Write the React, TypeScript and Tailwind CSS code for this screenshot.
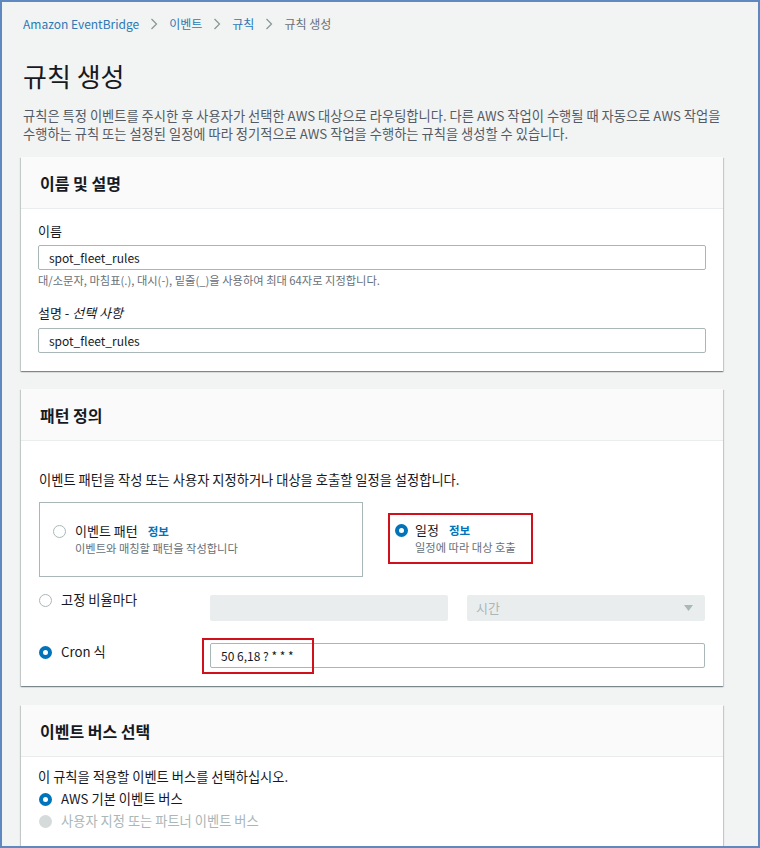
import React from 'react';

type RadioState = 'on' | 'off' | 'disabled';

function Radio({ state }: { state: RadioState }) {
  if (state === 'on') {
    return <span className="block w-[13px] h-[13px] shrink-0 rounded-full border-4 border-[#0073bb] bg-white" />;
  }
  if (state === 'disabled') {
    return <span className="block w-[13px] h-[13px] shrink-0 rounded-full bg-[#d5dbdb]" />;
  }
  return <span className="block w-[13px] h-[13px] shrink-0 rounded-full border border-[#aab7b8] bg-white" />;
}

function Chevron() {
  return (
    <svg width="8" height="12" viewBox="0 0 8 12" className="mx-[11px] shrink-0">
      <polyline points="1.5,1 6.5,6 1.5,11" fill="none" stroke="#879596" strokeWidth="1.2" />
    </svg>
  );
}

function Card({ title, children, className = '' }: { title: string; children: React.ReactNode; className?: string }) {
  return (
    <section
      className={`bg-white shadow-[0_1px_1px_0_rgba(0,28,36,0.3),1px_1px_1px_0_rgba(0,28,36,0.15),-1px_1px_1px_0_rgba(0,28,36,0.15)] ${className}`}
    >
      <div className="h-[52px] bg-[#fafafa] border-b border-[#eaeded] px-[19px] flex items-center">
        <h2 className="text-[16px] font-bold leading-[20px] text-[#16191f]">{title}</h2>
      </div>
      {children}
    </section>
  );
}

function TextInput({ value, className = '' }: { value: string; className?: string }) {
  return (
    <div
      className={`h-[25px] border border-[#aab7b8] rounded-[2px] bg-white px-[10px] flex items-center text-[12px] text-[#16191f] ${className}`}
    >
      {value}
    </div>
  );
}

// radio + title/"정보" + description, radio lined up with the first line
function Choice({ title, sub, on, gap }: { title: string; sub: string; on: boolean; gap: string }) {
  return (
    <div className={`flex items-start ${gap}`}>
      <div className="mt-[2.5px]">
        <Radio state={on ? 'on' : 'off'} />
      </div>
      <div>
        <div className="leading-[18px] text-[13px] text-[#16191f] flex items-center">
          {title}
          <span className="ml-[10px] text-[11.5px] font-bold text-[#0073bb]">정보</span>
        </div>
        <div className="leading-[17px] text-[11.25px] text-[#687078]">{sub}</div>
      </div>
    </div>
  );
}

export default function App() {
  return (
    <div className="w-[760px] h-[848px] overflow-hidden border-2 border-[#5f87c0] bg-[#f2f3f3] font-['Noto_Sans_CJK_KR','Noto_Sans',sans-serif] text-[#16191f]">
      <div className="pl-[19px] pr-[35px] pt-[13px]">
        {/* Breadcrumb */}
        <nav className="flex items-center h-[18px] text-[12px] pl-[2px]">
          <span className="text-[#2b79b5]">Amazon EventBridge</span>
          <Chevron />
          <span className="text-[#2b79b5]">이벤트</span>
          <Chevron />
          <span className="text-[#2b79b5]">규칙</span>
          <Chevron />
          <span className="text-[#687078]">규칙 생성</span>
        </nav>

        <h1 className="mt-[27px] pl-[2px] leading-[32px] text-[26px] font-normal text-[#16191f]">규칙 생성</h1>

        <p className="mt-[15px] pl-[2px] leading-[18px] text-[13.25px] text-[#545b64] whitespace-nowrap">
          규칙은 특정 이벤트를 주시한 후 사용자가 선택한 AWS 대상으로 라우팅합니다. 다른 AWS 작업이 수행될 때 자동으로 AWS 작업을
          <br />
          수행하는 규칙 또는 설정된 일정에 따라 정기적으로 AWS 작업을 수행하는 규칙을 생성할 수 있습니다.
        </p>

        {/* 이름 및 설명 */}
        <Card title="이름 및 설명" className="mt-[14px]">
          <div className="px-[17px] pt-[13px] pb-[18px]">
            <div className="leading-[18px] text-[13px]">이름</div>
            <TextInput value="spot_fleet_rules" className="mt-[5px]" />
            <div className="mt-[3px] leading-[15px] text-[11.25px] text-[#687078]">
              대/소문자, 마침표(.), 대시(-), 밑줄(_)을 사용하여 최대 64자로 지정합니다.
            </div>
            <div className="mt-[16px] leading-[18px] text-[13px]">
              설명 - <i>선택 사항</i>
            </div>
            <TextInput value="spot_fleet_rules" className="mt-[6px]" />
          </div>
        </Card>

        {/* 패턴 정의 */}
        <Card title="패턴 정의" className="mt-[18px]">
          <div className="px-[18px] pt-[30px] pb-[18px]">
            <p className="leading-[18px] text-[13.25px] text-[#16191f]">
              이벤트 패턴을 작성 또는 사용자 지정하거나 대상을 호출할 일정을 설정합니다.
            </p>

            <div className="mt-[13px] flex items-start">
              <div className="w-[324px] h-[75px] border border-[#aab7b8] flex items-center pl-[13px]">
                <Choice title="이벤트 패턴" sub="이벤트와 매칭할 패턴을 작성합니다" on={false} gap="gap-[9px]" />
              </div>
              <div className="ml-[25px] mt-[11px] w-[145px] h-[51px] border-2 border-[#d0101b] flex items-center pl-[5px]">
                <Choice title="일정" sub="일정에 따라 대상 호출" on gap="gap-[7px]" />
              </div>
            </div>

            {/* 고정 비율마다 */}
            <div className="mt-[14px] flex items-start">
              <div className="w-[171px] h-[18px] flex items-center gap-[9px] text-[13.25px]">
                <Radio state="off" />
                <span>고정 비율마다</span>
              </div>
              <div className="mt-[4px] flex gap-[19px]">
                <div className="w-[238px] h-[26px] bg-[#eaeded] rounded-[2px]" />
                <div className="w-[238px] h-[26px] bg-[#eaeded] rounded-[2px] flex items-center justify-between pl-[9px] pr-[12px]">
                  <span className="text-[13px] text-[#aab7b8]">시간</span>
                  <svg width="9" height="6" viewBox="0 0 9 6">
                    <polygon points="0,0 9,0 4.5,6" fill="#aab7b8" />
                  </svg>
                </div>
              </div>
            </div>

            {/* Cron 식 */}
            <div className="mt-[22px] flex items-start">
              <div className="w-[171px] h-[18px] flex items-center gap-[9px] text-[13.25px]">
                <Radio state="on" />
                <span>Cron 식</span>
              </div>
              <div className="relative w-[495px]">
                <TextInput value="50 6,18 ? * * *" />
                <div className="absolute left-[-8px] top-[-5px] w-[112px] h-[36px] border-2 border-[#d0101b]" />
              </div>
            </div>
          </div>
        </Card>

        {/* 이벤트 버스 선택 */}
        <Card title="이벤트 버스 선택" className="mt-[19px]">
          <div className="px-[17px] pt-[11px] pb-[20px] text-[13.25px]">
            <p className="leading-[18px]">이 규칙을 적용할 이벤트 버스를 선택하십시오.</p>
            <div className="mt-[2px] h-[22px] pl-px flex items-center gap-[9px]">
              <Radio state="on" />
              <span>AWS 기본 이벤트 버스</span>
            </div>
            <div className="h-[22px] pl-px flex items-center gap-[9px] text-[#aab7b8]">
              <Radio state="disabled" />
              <span>사용자 지정 또는 파트너 이벤트 버스</span>
            </div>
          </div>
        </Card>
      </div>
    </div>
  );
}
